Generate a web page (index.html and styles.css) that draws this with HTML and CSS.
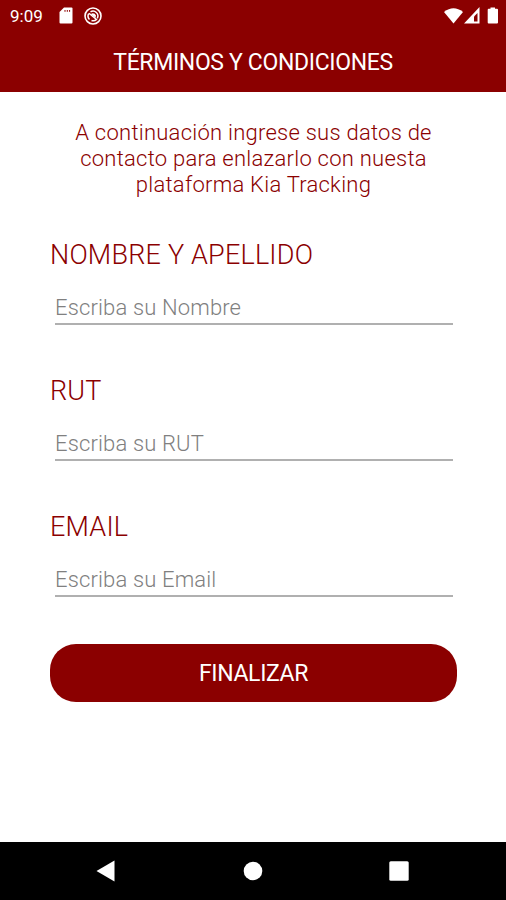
FILE: index.html
```html
<!DOCTYPE html>
<html lang="es">
<head>
  <meta charset="UTF-8">
  <title>Términos y condiciones</title>
  <link rel="stylesheet" href="styles.css">
</head>
<body>

  <header class="top">
    <div class="status">
      <span class="hora">9:09</span>
      <svg class="sd" width="14" height="17" viewBox="0 0 14 17">
        <path d="M5 0.5h7.500a1 1 0 0 1 1 1v14a1 1 0 0 1-1 1h-11a1 1 0 0 1-1-1V5z" fill="#fff"/>
        <path d="M6 3v1.800M8.300 3v1.800M10.600 3v1.800" stroke="#8b0000" stroke-width="1"/>
      </svg>
      <svg class="sync" width="18" height="18" viewBox="0 0 18 18" fill="none" stroke="#fff">
        <circle cx="9" cy="9" r="8" stroke-width="1.600"/>
        <path d="M5.500 12.500a4.900 4.900 0 0 1-.8-5.800M6.500 4.800a4.900 4.900 0 0 1 6.800 6.500M5 6.200l7.500 6.300a4.900 4.900 0 0 1-5 1" stroke-width="1.500"/>
        <path d="M6.800 7.200a3 3 0 0 1 4.800 3.500z" fill="#fff" stroke="none"/>
      </svg>
      <svg class="senal" width="56" height="18" viewBox="0 0 56 18" fill="#fff">
        <path d="M0 5Q9.500-2.500 19 5L9.500 16.500z"/>
        <path d="M35.500 0v16.500H20z"/>
        <path d="M33.500 6v8.500h-3.500V9.500z" fill="#8b0000"/>
        <path d="M46.500 1.800V.6h4.500v1.200h2a1 1 0 0 1 1 1V15.500a1 1 0 0 1-1 1h-8.300a1 1 0 0 1-1-1V2.800a1 1 0 0 1 1-1z"/>
      </svg>
    </div>
    <h1 class="titulo">TÉRMINOS Y CONDICIONES</h1>
  </header>

  <main class="contenido">
    <p class="intro">A continuación ingrese sus datos de<br>contacto para enlazarlo con nuesta<br>plataforma Kia Tracking</p>

    <form class="formulario">
      <div class="campo">
        <label for="nombre">NOMBRE Y APELLIDO</label>
        <input id="nombre" type="text" placeholder="Escriba su Nombre">
      </div>
      <div class="campo">
        <label for="rut">RUT</label>
        <input id="rut" type="text" placeholder="Escriba su RUT">
      </div>
      <div class="campo">
        <label for="email">EMAIL</label>
        <input id="email" type="email" placeholder="Escriba su Email">
      </div>
      <button class="btn" type="button">FINALIZAR</button>
    </form>
  </main>

  <nav class="navbar">
    <svg width="20" height="22" viewBox="0 0 20 22"><path d="M.5 11L18.500.5v21z" fill="#fff"/></svg>
    <svg width="20" height="20" viewBox="0 0 20 20"><circle cx="10" cy="10" r="9.300" fill="#fff"/></svg>
    <svg width="20" height="20" viewBox="0 0 20 20"><rect x=".3" y=".3" width="19.400" height="19.400" rx="1.500" fill="#fff"/></svg>
  </nav>

</body>
</html>
```

FILE: styles.css
```css
* {
  box-sizing: border-box;
}
body {
  margin: 0;
  height: 900px;
  display: flex;
  flex-direction: column;
  background-color: #fff;
  font-family: Roboto, "Open Sans", sans-serif;
  overflow: hidden;
}
.top {
  height: 92px;
  background-color: #8b0000;
  color: #fff;
}
.status {
  display: flex;
  align-items: center;
  height: 31px;
  padding: 0 6px 0 10px;
}
.hora {
  width: 49px;
  font-size: 17px;
}
.sync {
  margin-left: 11px;
}
.senal {
  margin-left: auto;
}
.titulo {
  margin: 0;
  font-size: 23px;
  font-weight: 400;
  line-height: 63px;
  letter-spacing: -0.35px;
  text-align: center;
}
.contenido {
  flex: 1;
  padding: 28px 49px 0 50px;
}
.intro {
  margin: 0 0 40px;
  color: #8b0000;
  font-size: 22px;
  font-weight: 300;
  line-height: 26px;
  letter-spacing: 0.25px;
  text-align: center;
}
.formulario {
  display: flex;
  flex-direction: column;
}
.campo {
  height: 136px;
}
.campo label {
  display: block;
  height: 34px;
  color: #8b0000;
  font-size: 27px;
  font-weight: 300;
  line-height: 34px;
  letter-spacing: 0.2px;
}
.campo input {
  display: block;
  width: 398px;
  height: 38px;
  margin: 15px 0 0 5px;
  padding: 4px 0 0;
  border: none;
  border-bottom: 2px solid #b0b0b0;
  background: none;
  font-family: inherit;
  font-size: 22px;
  font-weight: 300;
  letter-spacing: 0.15px;
}
.campo input::placeholder {
  color: #808080;
}
.btn {
  height: 58px;
  margin-top: -2px;
  border: none;
  border-radius: 26px;
  background-color: #8b0000;
  color: #fff;
  font-family: inherit;
  font-size: 23px;
  font-weight: 400;
  letter-spacing: -0.35px;
}
.navbar {
  display: flex;
  align-items: center;
  justify-content: space-between;
  height: 58px;
  padding: 0 97px 0 96px;
  background-color: #000;
}
```
